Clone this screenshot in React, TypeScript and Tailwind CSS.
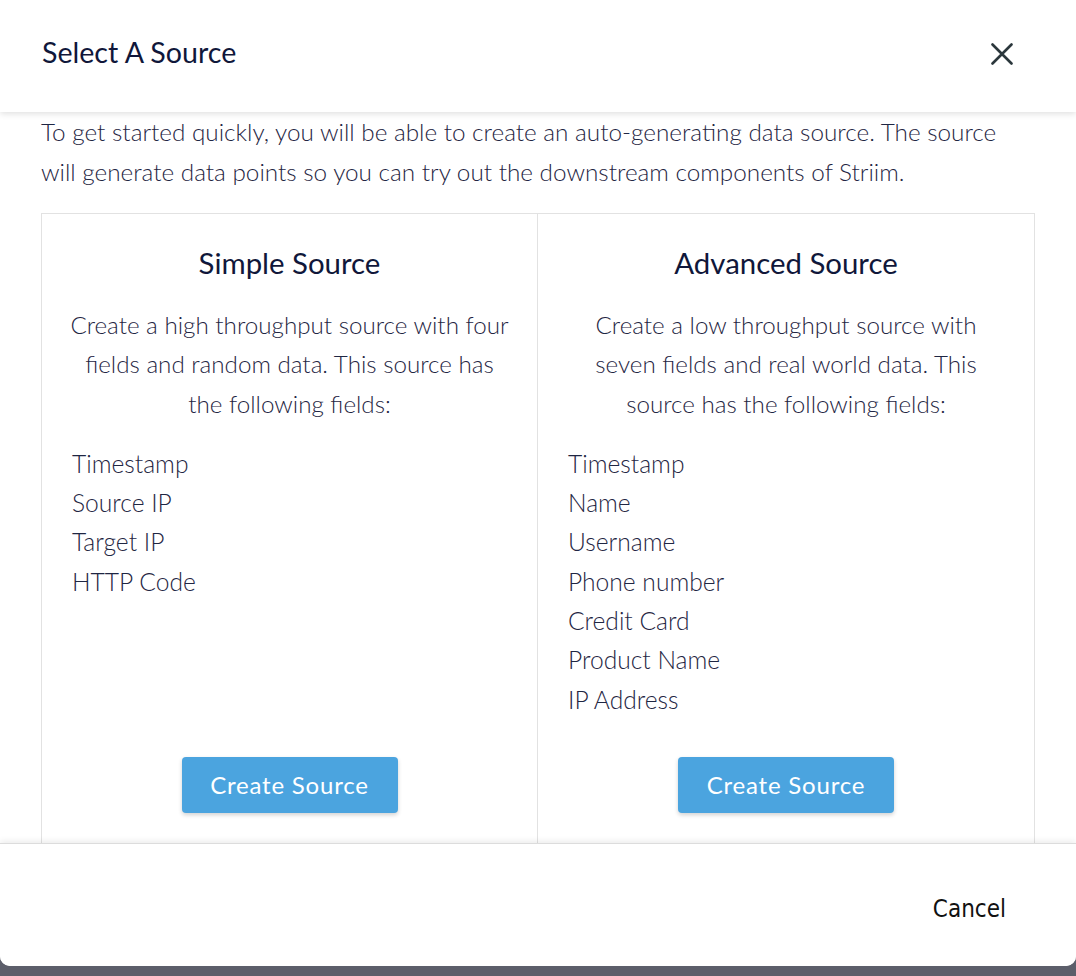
const simpleFields = ["Timestamp", "Source IP", "Target IP", "HTTP Code"];
const advancedFields = [
  "Timestamp",
  "Name",
  "Username",
  "Phone number",
  "Credit Card",
  "Product Name",
  "IP Address",
];

function SourceCard({
  title,
  description,
  fields,
  last,
}: {
  title: string;
  description: string;
  fields: string[];
  last?: boolean;
}) {
  return (
    <div
      className={
        "flex h-[720px] flex-col px-[24px] pt-[31px] " +
        (last ? "" : "border-r border-[#e2e2e2]")
      }
    >
      <h3 className="text-center text-[29.4px] leading-[36px] text-[#10173a]">{title}</h3>
      <p
        className={
          "mt-[24px] text-center text-[24.2px] font-light leading-[39.3px] text-[#1f2643] " +
          (last ? "px-[5px]" : "")
        }
      >
        {description}
      </p>
      <ul className="mt-[21px] h-[313px] pl-[6px] text-[24.6px] font-light leading-[39.3px] text-[#1f2643]">
        {fields.map((f) => (
          <li key={f}>{f}</li>
        ))}
      </ul>
      <div className="flex justify-center">
        <button
          type="button"
          className="h-[56px] w-[216px] rounded-[4px] bg-[#4ba4df] text-[24px] tracking-[0.8px] text-white shadow-[0_2px_4px_rgba(0,0,0,0.18)]"
        >
          Create Source
        </button>
      </div>
    </div>
  );
}

export default function App() {
  return (
    <div
      className="flex h-[976px] w-full flex-col bg-[#5c5e6a]"
      style={{ fontFamily: "Lato, 'Noto Sans', sans-serif" }}
    >
      <div className="flex h-[966px] flex-col overflow-hidden rounded-b-[10px] bg-white">
        <header className="relative z-10 flex h-[112px] shrink-0 items-center justify-between bg-white pl-[42px] pr-[63px] shadow-[0_2px_6px_rgba(0,0,0,0.12)]">
          <h2 className="pb-[8px] text-[28.6px] text-[#10173a]">Select A Source</h2>
          <svg width="22" height="22" viewBox="0 0 22 22" className="mb-[4px]">
            <path d="M1.5 1.5 L20.5 20.5 M20.5 1.5 L1.5 20.5" stroke="#2b373c" strokeWidth="2.6" strokeLinecap="round" />
          </svg>
        </header>

        <div className="flex-1 overflow-hidden px-[41px]">
          <p className="text-[24.3px] font-light leading-[40px] text-[#1f2643]">
            To get started quickly, you will be able to create an auto-generating data source. The
            source will generate data points so you can try out the downstream components of Striim.
          </p>
          <div className="mt-[21px] grid grid-cols-2 border border-[#e2e2e2]">
            <SourceCard
              title="Simple Source"
              description="Create a high throughput source with four fields and random data. This source has the following fields:"
              fields={simpleFields}
            />
            <SourceCard
              title="Advanced Source"
              description="Create a low throughput source with seven fields and real world data. This source has the following fields:"
              fields={advancedFields}
              last
            />
          </div>
        </div>

        <footer className="relative z-10 flex h-[123px] shrink-0 items-center justify-end border-t border-[#dcdcdc] bg-white pr-[70px] pt-[8px] shadow-[0_-2px_6px_rgba(0,0,0,0.08)]">
          <button
            type="button"
            className="text-[24px] text-[#111111]"
            style={{ fontFamily: "'DejaVu Sans Condensed', 'Liberation Sans Narrow', 'Liberation Sans', sans-serif" }}
          >
            Cancel
          </button>
        </footer>
      </div>
    </div>
  );
}
